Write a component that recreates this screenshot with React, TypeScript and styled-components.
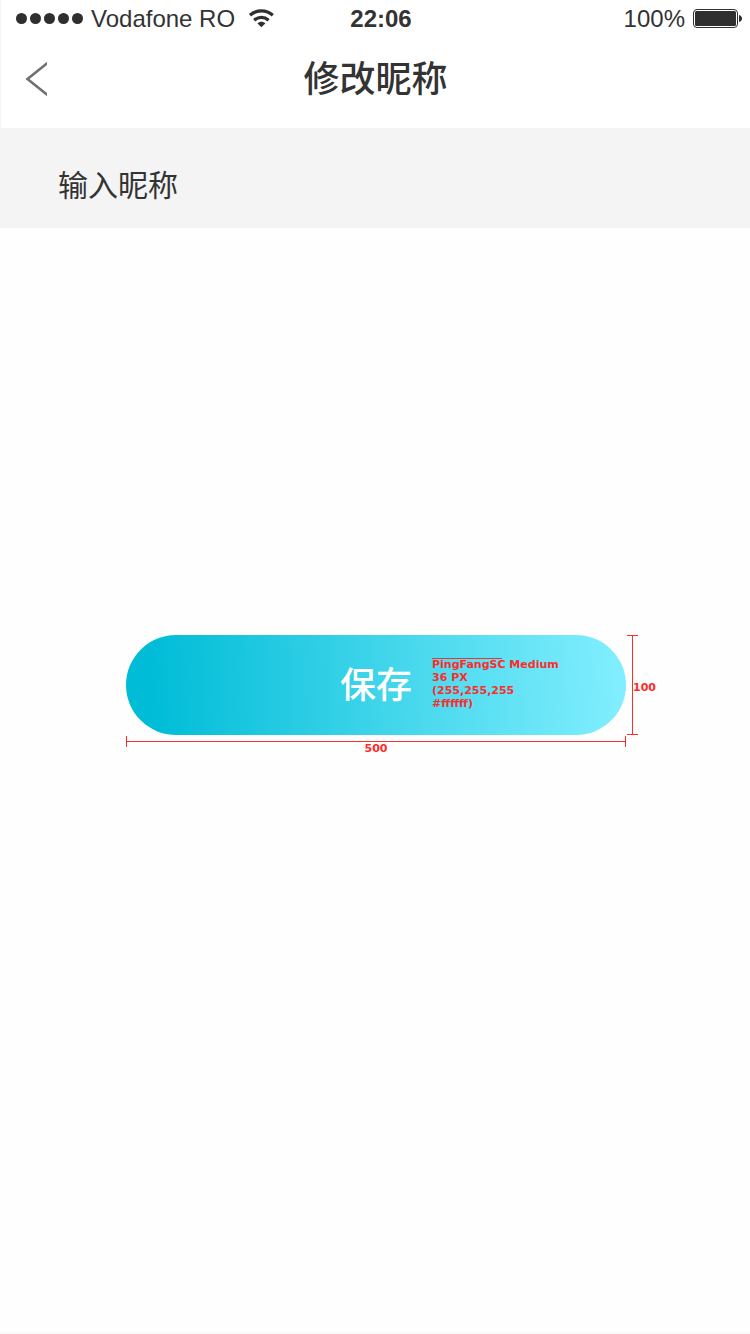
import React from "react";
import styled, { createGlobalStyle } from "styled-components";

const ink = "#333333";
const mark = "#fb2c2c";

const GlobalStyle = createGlobalStyle`
  *, *::before, *::after { box-sizing: border-box; }
  body {
    margin: 0;
    background: #fefefe;
    color: ${ink};
    font-family: "Liberation Sans", "Noto Sans CJK SC", sans-serif;
  }
  button, input { font: inherit; color: inherit; border: 0; margin: 0; padding: 0; }
`;

const Page = styled.div`
  min-height: 100vh;
  display: flex;
  flex-direction: column;
  border-bottom: 2px solid #f8f8f8;
`;

const Header = styled.header`
  background: #ffffff;
  border-left: 1px solid #f4f4f4;
`;

const StatusBar = styled.div`
  display: grid;
  grid-template-columns: 1fr auto 1fr;
  align-items: center;
  height: 38px;
  padding: 0 8px 0 15px;
  font-size: 24px;
  line-height: 28px;
`;

const StatusGroup = styled.div<{ $end?: boolean }>`
  display: flex;
  align-items: center;
  justify-content: ${(p) => (p.$end ? "flex-end" : "flex-start")};
  gap: 8px;
`;

const Signal = styled.div`
  display: flex;
  gap: 3px;
  padding-bottom: 1px;
`;

const Dot = styled.span`
  width: 11px;
  height: 11px;
  border-radius: 50%;
  background: #2f2f2f;
`;

const Time = styled.time`
  padding-left: 4px;
  font-weight: 700;
`;

const NavBar = styled.nav`
  display: grid;
  grid-template-columns: 72px 1fr 72px;
  align-items: center;
  height: 90px;
  padding-bottom: 8px;
`;

const BackButton = styled.button`
  display: flex;
  align-items: center;
  height: 72px;
  padding-left: 24px;
  background: none;
  cursor: pointer;
`;

const Title = styled.h1`
  margin: 0;
  padding-bottom: 6px;
  text-align: center;
  font-family: "Noto Sans CJK SC", sans-serif;
  font-size: 36px;
  font-weight: 500;
  line-height: 52px;
`;

const NameInput = styled.input`
  display: block;
  width: 100%;
  height: 100px;
  && { padding: 10px 58px 0; }
  border-radius: 0;
  background: #f4f4f4;
  outline: none;
  font-family: "Noto Sans CJK SC", sans-serif;
  font-size: 30px;

  &::placeholder {
    color: ${ink};
    opacity: 1;
  }
`;

const Content = styled.main`
  flex: 1;
  padding: 407px 124px 0 126px;
`;

const Measured = styled.div`
  position: relative;
  max-width: 500px;
  margin: 0 auto;
`;

const SaveButton = styled.button`
  display: block;
  width: 100%;
  height: 100px;
  border-radius: 50px;
  background: linear-gradient(88deg, #00bcd7 5%, #80eefe 98%);
  && {
    padding-bottom: 6px;
    color: #ffffff;
  }
  font-family: "Noto Sans CJK SC", sans-serif;
  font-size: 36px;
  font-weight: 500;
  line-height: 52px;
  cursor: pointer;
`;

const Note = styled.div`
  font-family: "DejaVu Sans", sans-serif;
  font-size: 11px;
  font-weight: 700;
  line-height: 13px;
  color: ${mark};
`;

const FontNote = styled(Note)`
  position: absolute;
  left: 306px;
  top: 23px;
  white-space: pre;
  pointer-events: none;

  &::before {
    content: "";
    position: absolute;
    left: 0;
    top: 0;
    width: 70px;
    height: 1px;
    background: ${mark};
  }
`;

const WidthRule = styled(Note)`
  position: absolute;
  left: 0;
  right: 0;
  top: 101px;
  height: 11px;
  padding-top: 6px;
  text-align: center;
  border: solid ${mark};
  border-width: 0 1px;

  &::before {
    content: "";
    position: absolute;
    left: 0;
    right: 0;
    top: 5px;
    height: 1px;
    background: ${mark};
  }
`;

const HeightRule = styled(Note)`
  position: absolute;
  left: calc(100% + 1px);
  top: 0;
  width: 11px;
  height: 100px;
  padding: 4px 0 0 6px;
  display: flex;
  align-items: center;
  border: solid ${mark};
  border-width: 1px 0;

  &::before {
    content: "";
    position: absolute;
    left: 5px;
    top: 0;
    bottom: 0;
    width: 1px;
    background: ${mark};
  }
`;

const WifiIcon = () => (
  <svg width="34" height="22" viewBox="-6 8 34 22" fill="none" aria-hidden="true">
    <g stroke="#2f2f2f" strokeWidth="3.2">
      <path d="M1 15.200C7.500 9.400 17.300 9.400 23.800 15.200" />
      <path d="M5.200 20.200C9.500 16.400 15.300 16.400 19.600 20.200" />
    </g>
    <path d="M8.300 23.300C10.700 21.200 14.100 21.200 16.500 23.300L12.400 27.300Z" fill="#2f2f2f" />
  </svg>
);

const BatteryIcon = () => (
  <svg width="49" height="20" viewBox="0 0 49 20" fill="none" aria-hidden="true">
    <rect x="0.500" y="0.500" width="44" height="18" rx="3.500" stroke="#2f2f2f" />
    <rect x="2" y="2" width="41" height="15" rx="1.500" fill="#2f2f2f" />
    <path d="M46 6Q49 7 49 9.500T46 13Z" fill="#2f2f2f" />
  </svg>
);

const BackIcon = () => (
  <svg width="22" height="36" viewBox="0 0 22 36" fill="none" aria-hidden="true">
    <path d="M23 1.500L2.500 18L23 34.500" stroke="#707070" strokeWidth="2.600" />
  </svg>
);

export default function App() {
  return (
    <>
      <GlobalStyle />
      <Page>
        <Header>
          <StatusBar>
            <StatusGroup>
              <Signal>
                {[0, 1, 2, 3, 4].map((n) => (
                  <Dot key={n} />
                ))}
              </Signal>
              <span>Vodafone RO</span>
              <WifiIcon />
            </StatusGroup>
            <Time>22:06</Time>
            <StatusGroup $end>
              <span>100%</span>
              <BatteryIcon />
            </StatusGroup>
          </StatusBar>
          <NavBar>
            <BackButton type="button" aria-label="返回">
              <BackIcon />
            </BackButton>
            <Title>修改昵称</Title>
          </NavBar>
        </Header>
        <NameInput type="text" aria-label="输入昵称" placeholder="输入昵称" />
        <Content>
          <Measured>
            <SaveButton type="button">保存</SaveButton>
            <FontNote>{"PingFangSC Medium\n36 PX\n(255,255,255\n#ffffff)"}</FontNote>
            <WidthRule>500</WidthRule>
            <HeightRule>100</HeightRule>
          </Measured>
        </Content>
      </Page>
    </>
  );
}
